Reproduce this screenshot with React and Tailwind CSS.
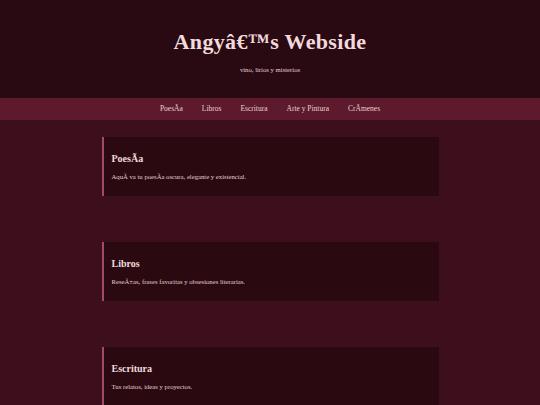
const links = ["PoesÃ\u00ADa", "Libros", "Escritura", "Arte y Pintura", "CrÃ\u00ADmenes"];

const sections = [
    { title: "PoesÃ\u00ADa", text: "AquÃ\u00AD va tu poesÃ\u00ADa oscura, elegante y existencial." },
    { title: "Libros", text: "ReseÃ±as, frases favoritas y obsesiones literarias." },
    { title: "Escritura", text: "Tus relatos, ideas y proyectos." },
];

function App() {
    return (
        <div className="min-h-screen bg-[#3d0f1c]" style={{ fontFamily: '"Liberation Serif", "Times New Roman", serif' }}>
            {/* Header */}
            <header className="h-[98px] bg-[#2a0a12] flex flex-col items-center pt-[29px]">
                <h1 className="text-[22px] leading-[26px] font-bold tracking-[0.35px] text-[#f1dade]">
                    Angyâ€™s Webside
                </h1>
                <p className="mt-[10px] text-[6.7px] leading-[10px] text-[#e6ccd2]">vino, lirios y misterios</p>
            </header>

            {/* Nav */}
            <nav className="h-[22px] bg-[#5c1a2c] flex justify-center items-center gap-[19px]">
                {links.map((l) => (
                    <a key={l} className="text-[7.5px] leading-[10px] text-[#ecd0d7]">{l}</a>
                ))}
            </nav>

            {/* Sections */}
            <main className="pt-[17px] flex flex-col items-center gap-[46px]">
                {sections.map((s) => (
                    <section key={s.title} className="w-[337px] bg-[#2a0a10] border-l-2 border-[#a3496b] pl-[8px] pr-[10px] pt-[15px] pb-[14px]">
                        <h2 className="text-[10px] leading-[14px] font-bold text-[#f1dade]">{s.title}</h2>
                        <p className="mt-[6px] text-[6.7px] leading-[10px] text-[#e6ccd2]">{s.text}</p>
                    </section>
                ))}
            </main>
        </div>
    );
}

export default App;
